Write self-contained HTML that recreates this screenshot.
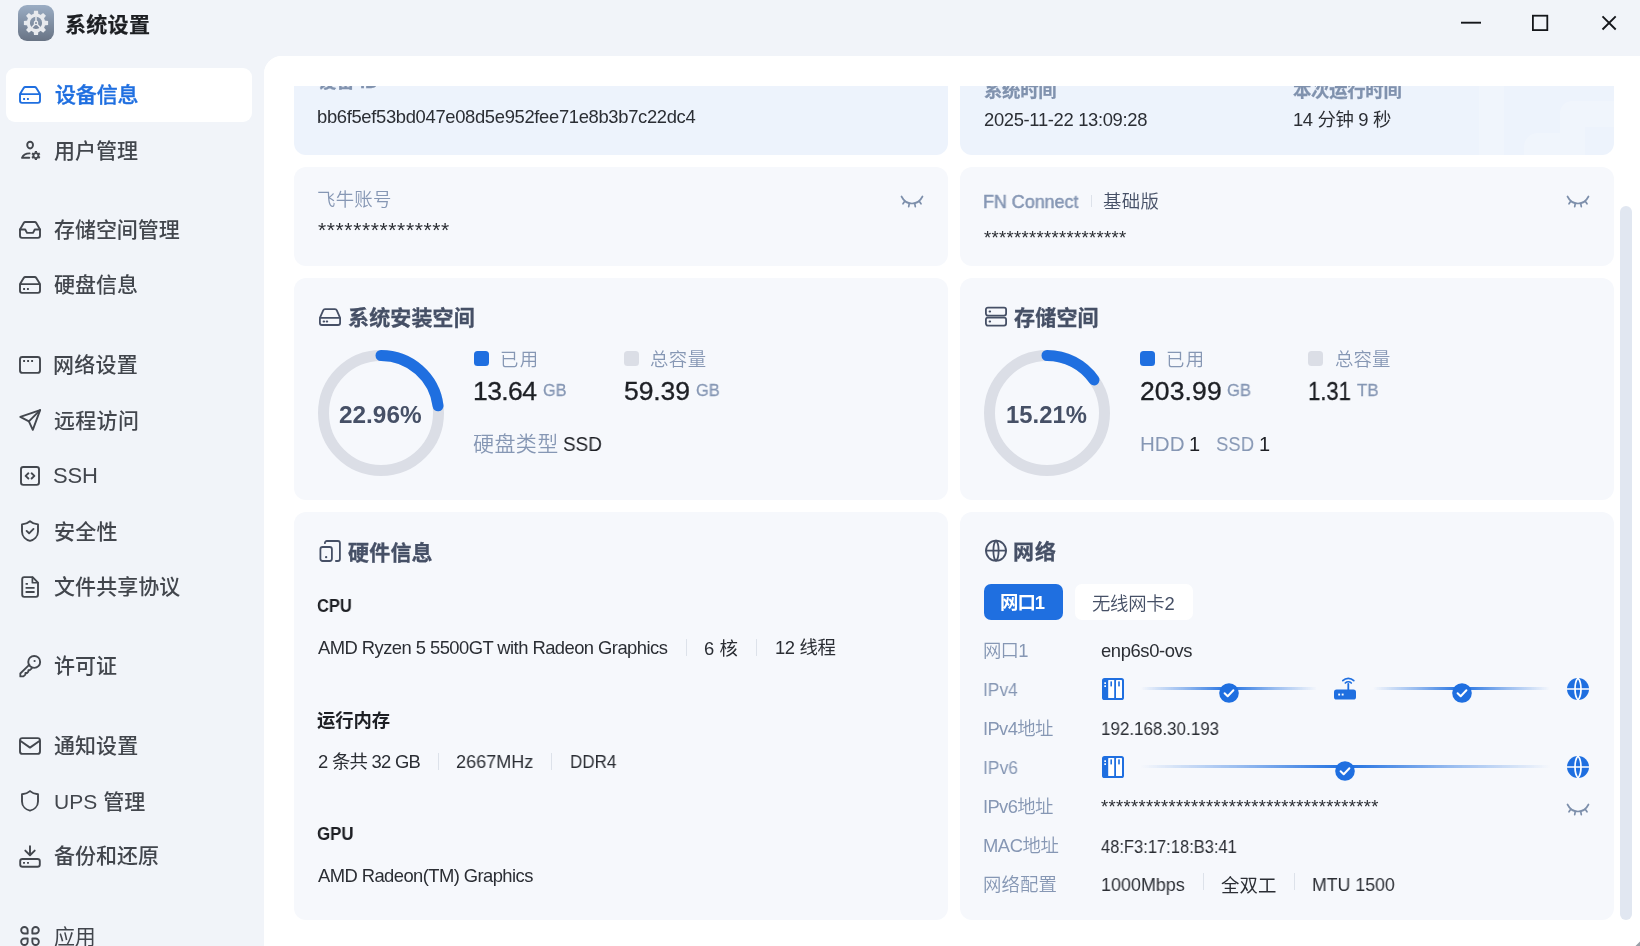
<!DOCTYPE html>
<html lang="zh-CN">
<head>
<meta charset="utf-8">
<title>系统设置</title>
<style>
*{box-sizing:border-box;margin:0;padding:0}
html,body{width:1640px;height:946px;overflow:hidden}
body{position:relative;background:#f1f4f9;font-family:"Liberation Sans","Noto Sans CJK SC",sans-serif;color:#2b2e34;font-size:18px}
.a{position:absolute;white-space:nowrap}
div.a{will-change:transform}
svg{display:block;overflow:visible}
svg.a{position:absolute}
.card{position:absolute;background:#f6f8fc;border-radius:12px;width:654px}
.sep{position:absolute;width:1px;background:#dde2ea}
.sq{position:absolute;width:15px;height:15px;border-radius:3.5px}
.ico{position:absolute;fill:none;stroke:#454a52;stroke-width:1.75;stroke-linecap:round;stroke-linejoin:round}
</style>
</head>
<body>
<div class="a" style="left:18px;top:5px;width:36px;height:36px;border-radius:9px;background:linear-gradient(180deg,#9badc4 0%,#687384 100%)"><svg viewBox="0 0 36 36" width="36" height="36">
<defs><linearGradient id="gg" x1="0" y1="0" x2="0" y2="1"><stop offset="0" stop-color="#f1f2f4"/><stop offset="1" stop-color="#dcdfe4"/></linearGradient></defs>
<g transform="translate(18 17.900)" fill="#e8eaee" stroke="none"><path d="M-2.500 -8L-2 -12.100H2L2.500 -8Z" transform="rotate(0)"/><path d="M-2.500 -8L-2 -12.100H2L2.500 -8Z" transform="rotate(45)"/><path d="M-2.500 -8L-2 -12.100H2L2.500 -8Z" transform="rotate(90)"/><path d="M-2.500 -8L-2 -12.100H2L2.500 -8Z" transform="rotate(135)"/><path d="M-2.500 -8L-2 -12.100H2L2.500 -8Z" transform="rotate(180)"/><path d="M-2.500 -8L-2 -12.100H2L2.500 -8Z" transform="rotate(225)"/><path d="M-2.500 -8L-2 -12.100H2L2.500 -8Z" transform="rotate(270)"/><path d="M-2.500 -8L-2 -12.100H2L2.500 -8Z" transform="rotate(315)"/>
<circle r="7.700" fill="none" stroke="#e8eaee" stroke-width="3.200"/>
<path d="M0 0V-6.500M0 0L-4.500 5M0 0L4.500 5" stroke="#e8eaee" stroke-width="1.500" fill="none"/>
<circle r="2.300"/><circle r="1" fill="#7f8b9e"/>
</g></svg></div>
<svg class="a" style="left:1440px;top:0" width="200" height="56" viewBox="0 0 200 56" fill="none" stroke="#15171b" stroke-width="1.9">
<path d="M21 22.7H41"/>
<rect x="92.9" y="15.7" width="14.4" height="14.4" stroke-width="1.8"/>
<path d="M162.5 16.3L175.7 29.5M175.7 16.3L162.5 29.5"/>
</svg>
<div class="a" style="left:6px;top:68px;width:246px;height:54px;border-radius:9px;background:#fff"></div>
<svg class="a" style="left:0;top:0" width="264" height="946" viewBox="0 0 264 946" fill="none" stroke="#43474e" stroke-width="1.900" stroke-linecap="round" stroke-linejoin="round"><g stroke="#1f6fe0"><path d="M20 94.10000000000001V100.85000000000001a2 2 0 0 0 2 2H38a2 2 0 0 0 2-2V94.10000000000001M20 94.10000000000001H40M20 94.10000000000001L23.700 87.95a2 2 0 0 1 1.750-1H34.550a2 2 0 0 1 1.750 1L40 94.10000000000001"/><path d="M23.150 99.0H25.050M26.950 99.0H28.850" stroke-linecap="butt"/></g>
<ellipse cx="30.100" cy="145.1" rx="2.900" ry="3.350"/><path d="M29.600 153.4C25.500 153.4 23 155.2 22 157.8H29.300"/><circle cx="35.9" cy="155.6" r="2.500"/><path d="M38.41 157.05L39.80 157.85M35.90 158.50L35.90 160.10M33.39 157.05L32.00 157.85M33.39 154.15L32.00 153.35M35.90 152.70L35.90 151.10M38.41 154.15L39.80 153.35" stroke-width="2.200" stroke-linecap="butt"/>
<path d="M20 229.5V235.85a2 2 0 0 0 2 2H38a2 2 0 0 0 2-2V229.5L36.300 222.95000000000002a2 2 0 0 0-1.750-1H25.450a2 2 0 0 0-1.750 1L20 229.5Z"/><path d="M20 229.5H25.200L27 232.9H33L34.800 229.5H40"/>
<path d="M20 284.09999999999997V290.84999999999997a2 2 0 0 0 2 2H38a2 2 0 0 0 2-2V284.09999999999997M20 284.09999999999997H40M20 284.09999999999997L23.700 277.95a2 2 0 0 1 1.750-1H34.550a2 2 0 0 1 1.750 1L40 284.09999999999997"/><path d="M23.150 289.0H25.050M26.950 289.0H28.850" stroke-linecap="butt"/>
<rect x="20" y="356.95" width="20" height="15.900" rx="2.400"/><path d="M23.150 361.0H25.050M27.150 361.0H29.050M31.150 361.0H33.050" stroke-linecap="butt"/>
<path d="M40.100 410.1L20.300 416.9L28.900 421.3L32.800 429.8Z"/><path d="M40.100 410.1L28.900 421.3"/>
<rect x="21" y="466.95" width="18" height="17.900" rx="2.300"/><path d="M28.400 473.29999999999995L25.600 475.9L28.400 478.5M31.600 473.29999999999995L34.400 475.9L31.600 478.5"/>
<path d="M30 521.2C28 523.0 25 524.0 22 524.4000000000001V531.5C22 536.8 26.300 539.9 30 540.8C33.700 539.9 38 536.8 38 531.5V524.4000000000001C35 524.0 32 523.0 30 521.2Z"/><path d="M26.600 530.9L29.100 533.3L33.500 528.9"/>
<path d="M32.600 577.15H24.200a2 2 0 0 0-2 2V594.85a2 2 0 0 0 2 2H36a2 2 0 0 0 2-2V582.55L32.600 577.15Z"/><path d="M32.400 577.4499999999999V582.75H37.700" stroke-width="1.700"/><path d="M25.600 583.9H27.900M25.600 587.9H34.600M25.600 592H34.600" stroke-linecap="butt"/>
<circle cx="34.2" cy="661.9" r="5.950"/><circle cx="34.6" cy="661.0" r="1.100" fill="#43474e" stroke="none"/><path d="M29.400 664.6L20.300 673.5V676.4H23.400L25.400 674.6V673H27L28.400 671.6V670.2H29.800L31.800 668.3" stroke-width="1.800"/>
<rect x="20" y="738.1" width="20" height="15.800" rx="2.400"/><path d="M20.600 741L30 747.6L39.400 741"/>
<path d="M30 791.1C28 792.9 25 793.9 22 794.3000000000001V801.4C22 806.6999999999999 26.300 809.8 30 810.6999999999999C33.700 809.8 38 806.6999999999999 38 801.4V794.3000000000001C35 793.9 32 792.9 30 791.1Z"/>
<rect x="20.200" y="859" width="19.600" height="7.700" rx="2.300"/><path d="M23.050 862.9H24.950M27.050 862.9H28.950" stroke-linecap="butt"/><path d="M30 846.3V855M25.300 850.6L30 855.2L34.700 850.6"/>
<path d="M24.4 926.95A3.25 3.25 0 0 1 27.65 930.2V933.45H24.4A3.25 3.25 0 0 1 24.4 926.95Z"/><path d="M35.6 926.95A3.25 3.25 0 0 1 35.6 933.45H32.35V930.2A3.25 3.25 0 0 1 35.6 926.95Z"/><path d="M24.4 945.05A3.25 3.25 0 0 1 24.4 938.55H27.65V941.8A3.25 3.25 0 0 1 24.4 945.05Z"/><path d="M35.6 945.05A3.25 3.25 0 0 0 35.6 938.55H32.35V941.8A3.25 3.25 0 0 0 35.6 945.05Z"/></svg>
<div class="a" style="left:264px;top:56px;width:1376px;height:890px;background:#fff;border-top-left-radius:18px"></div>
<div class="card" style="left:294px;top:60px;height:95px;background:#edf3fc"></div>
<div class="card" id="c2" style="left:960px;top:60px;height:95px;background:#edf3fc;overflow:hidden"><div style="position:absolute;left:519px;top:0;width:25px;height:95px;background:rgba(255,255,255,.2)"></div><div style="position:absolute;left:600px;top:41px;width:60px;height:26px;border-radius:12px 0 0 0;background:rgba(255,255,255,.2)"></div><div style="position:absolute;left:564px;top:73px;width:61px;height:30px;border-radius:14px 0 0 0;background:rgba(255,255,255,.2)"></div><div style="position:absolute;left:600px;top:67px;width:25px;height:6px;background:rgba(255,255,255,.2)"></div></div>
<div class="card" style="left:294px;top:167px;height:99px"></div>
<div class="card" style="left:960px;top:167px;height:99px"></div>
<div class="card" style="left:294px;top:278px;height:222px"></div>
<div class="card" style="left:960px;top:278px;height:222px"></div>
<div class="card" style="left:294px;top:512px;height:408px"></div>
<div class="card" style="left:960px;top:512px;height:408px"></div>
<div class="a" style="left:1620px;top:206px;width:12px;height:714px;border-radius:6px;background:#e1e7f1"></div>
<div class="a" style="left:984px;top:584px;width:79px;height:36px;border-radius:7px;background:#1f6fe0"></div>
<div class="a" style="left:1075px;top:584px;width:118px;height:36px;border-radius:7px;background:#fff"></div>
<div class="sep" style="left:1091px;top:195.2px;height:11.6px"></div>
<div class="sep" style="left:686px;top:638.5px;height:17.3px"></div>
<div class="sep" style="left:756px;top:638.5px;height:17.3px"></div>
<div class="sep" style="left:438px;top:752.5px;height:17.0px"></div>
<div class="sep" style="left:551px;top:752.5px;height:17.0px"></div>
<div class="sep" style="left:1203px;top:872.5px;height:17.0px"></div>
<div class="sep" style="left:1294px;top:872.5px;height:17.0px"></div>
<div class="sq" style="left:474px;top:351px;background:#1f6fe0"></div>
<div class="sq" style="left:624px;top:351px;background:#dbdee6"></div>
<div class="sq" style="left:1140px;top:351px;background:#1f6fe0"></div>
<div class="sq" style="left:1308px;top:351px;background:#dbdee6"></div>
<svg class="a" style="left:318px;top:350px" width="126" height="126" viewBox="0 0 126 126" fill="none"><circle cx="63" cy="63" r="57.5" stroke="#dbdee6" stroke-width="11"/><circle cx="63" cy="63" r="57.5" stroke="#1f6fe0" stroke-width="11" stroke-linecap="round" stroke-dasharray="82.95 400" transform="rotate(-90 63 63)"/></svg>
<svg class="a" style="left:984px;top:350px" width="126" height="126" viewBox="0 0 126 126" fill="none"><circle cx="63" cy="63" r="57.5" stroke="#dbdee6" stroke-width="11"/><circle cx="63" cy="63" r="57.5" stroke="#1f6fe0" stroke-width="11" stroke-linecap="round" stroke-dasharray="54.95 400" transform="rotate(-90 63 63)"/></svg>
<svg class="a" style="left:318px;top:305px" width="24" height="24" viewBox="0 0 24 24" fill="none" stroke="#465066" stroke-width="1.8" stroke-linecap="round" stroke-linejoin="round"><path d="M1.900 12.800V18a2 2 0 0 0 2 2H20.100a2 2 0 0 0 2-2V12.800M1.900 12.800H22.100M1.900 12.800L5.200 5.400a2 2 0 0 1 1.800-1.200H17a2 2 0 0 1 1.800 1.200L22.100 12.800"/><path d="M5.600 16.400h.5M8.700 16.400h.5" stroke-width="2"/></svg>
<svg class="a" style="left:984px;top:305px" width="24" height="24" viewBox="0 0 24 24" fill="none" stroke="#465066" stroke-width="1.8" stroke-linecap="round" stroke-linejoin="round"><rect x="1.900" y="2.600" width="20.200" height="8" rx="2"/><rect x="1.900" y="12.600" width="20.200" height="8" rx="2"/><path d="M5.600 6.600h.5M5.600 16.600h.5" stroke-width="2"/></svg>
<svg class="a" style="left:318px;top:539px" width="24" height="24" viewBox="0 0 24 24" fill="none" stroke="#465066" stroke-width="1.8" stroke-linecap="round" stroke-linejoin="round"><rect x="2.400" y="8" width="11.500" height="14" rx="2.200"/><path d="M6.900 4.200V4a2 2 0 0 1 2-2H19.900a2 2 0 0 1 2 2V20a2 2 0 0 1-2 2H17.900"/><path d="M8.100 18.200h.1" stroke-width="2.200"/></svg>
<svg class="a" style="left:984px;top:539px" width="24" height="24" viewBox="0 0 24 24" fill="none" stroke="#465066" stroke-width="1.8" stroke-linecap="round" stroke-linejoin="round"><circle cx="12" cy="11.700" r="10"/><path d="M2 11.700H22M12 1.700C8.500 4.700 8.500 18.700 12 21.700M12 1.700C15.500 4.700 15.500 18.700 12 21.700"/></svg>
<svg class="a" style="left:900px;top:195px" width="24" height="13" viewBox="0 0 24 13" fill="none" stroke="#7d8fab" stroke-width="1.7" stroke-linecap="round"><path d="M1.500 1.500C4 6.500 8 8.500 12 8.500S20 6.500 22.500 1.500M4.700 6.300L3 8.800M19.300 6.300L21 8.800M9.300 8.300L8.700 11.600M14.700 8.300L15.300 11.600"/></svg>
<svg class="a" style="left:1566px;top:195px" width="24" height="13" viewBox="0 0 24 13" fill="none" stroke="#7d8fab" stroke-width="1.7" stroke-linecap="round"><path d="M1.500 1.500C4 6.500 8 8.500 12 8.500S20 6.500 22.500 1.500M4.700 6.300L3 8.800M19.300 6.300L21 8.800M9.300 8.300L8.700 11.600M14.700 8.300L15.300 11.600"/></svg>
<svg class="a" style="left:1566px;top:803px" width="24" height="13" viewBox="0 0 24 13" fill="none" stroke="#7d8fab" stroke-width="1.7" stroke-linecap="round"><path d="M1.500 1.500C4 6.500 8 8.500 12 8.500S20 6.500 22.500 1.500M4.700 6.300L3 8.800M19.300 6.300L21 8.800M9.300 8.300L8.700 11.600M14.700 8.300L15.300 11.600"/></svg>
<svg class="a" style="left:1102px;top:678px" width="22" height="22" viewBox="0 0 22 22"><rect x="0" y="0" width="22" height="22" rx="2.600" fill="#1f6fe0"/><rect x="6.200" y="2" width="6" height="18" rx=".6" fill="#fff"/><rect x="14" y="2" width="6" height="18" rx=".6" fill="#fff"/><rect x="8.400" y="3.400" width="1.600" height="5" fill="#1f6fe0"/><rect x="16.200" y="3.400" width="1.600" height="5" fill="#1f6fe0"/><rect x="2.300" y="4.300" width="1.700" height="1.700" fill="#fff"/><rect x="2.300" y="7.300" width="1.700" height="1.700" fill="#fff"/></svg>
<div class="a" style="left:1141px;top:687.25px;width:176px;height:2.5px;background:linear-gradient(90deg,rgba(31,111,224,0) 0%,rgba(31,111,224,.45) 25%,#1f6fe0 50%,rgba(31,111,224,.45) 75%,rgba(31,111,224,0) 100%)"></div>
<svg class="a" style="left:1219px;top:682.7px" width="20" height="20" viewBox="0 0 20 20"><circle cx="10" cy="10" r="9.800" fill="#1f6fe0"/><path d="M5.600 10.200L8.700 13.200L14.400 7.300" fill="none" stroke="#fff" stroke-width="2" stroke-linecap="round" stroke-linejoin="round"/></svg>
<svg class="a" style="left:1334px;top:677px" width="22" height="23" viewBox="0 0 22 23"><rect x="0" y="12.500" width="22" height="10" rx="2.600" fill="#1f6fe0"/><rect x="4.200" y="16.600" width="1.900" height="1.900" fill="#fff"/><rect x="7.700" y="16.600" width="1.900" height="1.900" fill="#fff"/><path d="M14.300 13V6.800" stroke="#1f6fe0" stroke-width="1.800" fill="none" stroke-linecap="round"/><path d="M11.300 6a4.300 4.300 0 0 1 6 0M8.800 3.700a7.800 7.800 0 0 1 11 0" stroke="#1f6fe0" stroke-width="1.700" fill="none" stroke-linecap="round"/></svg>
<div class="a" style="left:1373px;top:687.25px;width:177px;height:2.5px;background:linear-gradient(90deg,rgba(31,111,224,0) 0%,rgba(31,111,224,.45) 25%,#1f6fe0 50%,rgba(31,111,224,.45) 75%,rgba(31,111,224,0) 100%)"></div>
<svg class="a" style="left:1451.7px;top:682.7px" width="20" height="20" viewBox="0 0 20 20"><circle cx="10" cy="10" r="9.800" fill="#1f6fe0"/><path d="M5.600 10.200L8.700 13.200L14.400 7.300" fill="none" stroke="#fff" stroke-width="2" stroke-linecap="round" stroke-linejoin="round"/></svg>
<svg class="a" style="left:1567px;top:678px" width="22" height="22" viewBox="0 0 22 22"><circle cx="11" cy="11" r="11" fill="#1f6fe0"/><path d="M0 11H22M11 0C7 4.500 7 17.500 11 22M11 0C15 4.500 15 17.500 11 22" fill="none" stroke="#fff" stroke-width="1.700"/></svg>
<svg class="a" style="left:1102px;top:756px" width="22" height="22" viewBox="0 0 22 22"><rect x="0" y="0" width="22" height="22" rx="2.600" fill="#1f6fe0"/><rect x="6.200" y="2" width="6" height="18" rx=".6" fill="#fff"/><rect x="14" y="2" width="6" height="18" rx=".6" fill="#fff"/><rect x="8.400" y="3.400" width="1.600" height="5" fill="#1f6fe0"/><rect x="16.200" y="3.400" width="1.600" height="5" fill="#1f6fe0"/><rect x="2.300" y="4.300" width="1.700" height="1.700" fill="#fff"/><rect x="2.300" y="7.300" width="1.700" height="1.700" fill="#fff"/></svg>
<div class="a" style="left:1141px;top:765.25px;width:409px;height:2.5px;background:linear-gradient(90deg,rgba(31,111,224,0) 0%,rgba(31,111,224,.45) 25%,#1f6fe0 50%,rgba(31,111,224,.45) 75%,rgba(31,111,224,0) 100%)"></div>
<svg class="a" style="left:1335.2px;top:760.7px" width="20" height="20" viewBox="0 0 20 20"><circle cx="10" cy="10" r="9.800" fill="#1f6fe0"/><path d="M5.600 10.200L8.700 13.200L14.400 7.300" fill="none" stroke="#fff" stroke-width="2" stroke-linecap="round" stroke-linejoin="round"/></svg>
<svg class="a" style="left:1567px;top:756px" width="22" height="22" viewBox="0 0 22 22"><circle cx="11" cy="11" r="11" fill="#1f6fe0"/><path d="M0 11H22M11 0C7 4.500 7 17.500 11 22M11 0C15 4.500 15 17.500 11 22" fill="none" stroke="#fff" stroke-width="1.700"/></svg>
<div class="a" id="title" style="left:65px;top:10px;font-size:21px;line-height:29px;font-weight:700;color:#1d1f23;letter-spacing:0.300px;-webkit-text-stroke:.25px #1d1f23">系统设置</div>
<div class="a" id="n1" style="left:55px;top:80px;font-size:21px;line-height:29px;font-weight:500;color:#1f6fe0;letter-spacing:-0.152px;-webkit-text-stroke:.4px #1f6fe0">设备信息</div>
<div class="a" id="n2" style="left:54px;top:136px;font-size:21px;line-height:29px;font-weight:500;color:#42464d;letter-spacing:0.011px">用户管理</div>
<div class="a" id="n3" style="left:54px;top:215px;font-size:21px;line-height:29px;font-weight:500;color:#42464d;letter-spacing:-0.047px">存储空间管理</div>
<div class="a" id="n4" style="left:54px;top:270px;font-size:21px;line-height:29px;font-weight:500;color:#42464d;letter-spacing:0.018px">硬盘信息</div>
<div class="a" id="n5" style="left:53px;top:350px;font-size:21px;line-height:29px;font-weight:500;color:#42464d;letter-spacing:0.235px">网络设置</div>
<div class="a" id="n6" style="left:54px;top:406px;font-size:21px;line-height:29px;font-weight:500;color:#42464d;letter-spacing:0.305px">远程访问</div>
<div class="a" id="n7" style="left:53px;top:460px;font-size:22px;line-height:31px;font-weight:500;color:#42464d;letter-spacing:-0.213px">SSH</div>
<div class="a" id="n8" style="left:54px;top:517px;font-size:21px;line-height:29px;font-weight:500;color:#42464d;letter-spacing:0.293px">安全性</div>
<div class="a" id="n9" style="left:54px;top:572px;font-size:21px;line-height:29px;font-weight:500;color:#42464d;letter-spacing:0.063px">文件共享协议</div>
<div class="a" id="n10" style="left:54px;top:651px;font-size:21px;line-height:29px;font-weight:500;color:#42464d;letter-spacing:0.029px">许可证</div>
<div class="a" id="n11" style="left:54px;top:731px;font-size:21px;line-height:29px;font-weight:500;color:#42464d;letter-spacing:0.048px">通知设置</div>
<div class="a" id="n12" style="left:54px;top:787px;font-size:21px;line-height:29px;font-weight:500;color:#42464d;letter-spacing:0.070px">UPS 管理</div>
<div class="a" id="n13" style="left:54px;top:841px;font-size:21px;line-height:29px;font-weight:500;color:#42464d;letter-spacing:-0.011px">备份和还原</div>
<div class="a" id="hash" style="left:317px;top:104px;font-size:18.4px;line-height:26px;font-weight:400;color:#2b2e34;letter-spacing:-0.334px">bb6f5ef53bd047e08d5e952fee71e8b3b7c22dc4</div>
<div class="a" id="time" style="left:984px;top:107px;font-size:18.4px;line-height:26px;font-weight:400;color:#2b2e34;letter-spacing:-0.334px">2025-11-22 13:09:28</div>
<div class="a" id="uptime" style="left:1293px;top:107px;font-size:18.4px;line-height:26px;font-weight:400;color:#2b2e34;letter-spacing:-0.360px">14 分钟 9 秒</div>
<div class="a" id="acct" style="left:317px;top:187px;font-size:18.4px;line-height:26px;font-weight:350;color:#8697b4;letter-spacing:0.249px">飞牛账号</div>
<div class="a" id="star1" style="left:318px;top:215px;font-size:21px;line-height:29px;font-weight:400;color:#2b2e34;letter-spacing:0.618px">***************</div>
<div class="a" id="fnc" style="left:983px;top:189px;font-size:18.4px;line-height:26px;font-weight:400;color:#8697b4;letter-spacing:0.000px;-webkit-text-stroke:.5px #8697b4;transform:scaleX(0.9731);transform-origin:0 50%">FN Connect</div>
<div class="a" id="basic" style="left:1103px;top:189px;font-size:18.4px;line-height:26px;font-weight:350;color:#465066;letter-spacing:0.397px">基础版</div>
<div class="a" id="star2" style="left:984px;top:225px;font-size:18.4px;line-height:26px;font-weight:400;color:#2b2e34;letter-spacing:0.348px">*******************</div>
<div class="a" id="h1" style="left:348px;top:303px;font-size:21px;line-height:29px;font-weight:700;color:#465066;letter-spacing:0.146px;-webkit-text-stroke:.3px #465066">系统安装空间</div>
<div class="a" id="pct1" style="left:339px;top:399px;font-size:23.2px;line-height:32px;font-weight:700;color:#465066;letter-spacing:0.000px;transform:scaleX(1.0501);transform-origin:0 50%">22.96%</div>
<div class="a" id="used1" style="left:500px;top:347px;font-size:18.4px;line-height:26px;font-weight:350;color:#8697b4;letter-spacing:1.356px">已用</div>
<div class="a" id="v1" style="left:473px;top:373px;font-size:26.5px;line-height:37px;font-weight:400;color:#1e2025;letter-spacing:-0.609px;-webkit-text-stroke:.35px #1e2025">13.64</div>
<div class="a" id="u1" style="left:543px;top:379px;font-size:17px;line-height:24px;font-weight:400;color:#8697b4;letter-spacing:0.000px;-webkit-text-stroke:.3px #8697b4;transform:scaleX(0.9574);transform-origin:0 50%">GB</div>
<div class="a" id="tot1" style="left:650px;top:347px;font-size:18.4px;line-height:26px;font-weight:350;color:#8697b4;letter-spacing:0.471px">总容量</div>
<div class="a" id="v2" style="left:624px;top:373px;font-size:26.5px;line-height:37px;font-weight:400;color:#1e2025;letter-spacing:-0.095px;-webkit-text-stroke:.35px #1e2025">59.39</div>
<div class="a" id="u2" style="left:696px;top:379px;font-size:17px;line-height:24px;font-weight:400;color:#8697b4;letter-spacing:0.000px;-webkit-text-stroke:.3px #8697b4;transform:scaleX(0.9640);transform-origin:0 50%">GB</div>
<div class="a" id="dtype" style="left:473px;top:429px;font-size:21px;line-height:29px;font-weight:350;color:#8697b4;letter-spacing:0.436px">硬盘类型</div>
<div class="a" id="ssd0" style="left:563px;top:430px;font-size:20px;line-height:28px;font-weight:400;color:#1e2025;letter-spacing:0.000px;transform:scaleX(0.9443);transform-origin:0 50%">SSD</div>
<div class="a" id="h2" style="left:1014px;top:303px;font-size:21px;line-height:29px;font-weight:700;color:#465066;letter-spacing:0.192px;-webkit-text-stroke:.3px #465066">存储空间</div>
<div class="a" id="pct2" style="left:1006px;top:399px;font-size:23.2px;line-height:32px;font-weight:700;color:#465066;letter-spacing:0.000px;transform:scaleX(1.0278);transform-origin:0 50%">15.21%</div>
<div class="a" id="used2" style="left:1166px;top:347px;font-size:18.4px;line-height:26px;font-weight:350;color:#8697b4;letter-spacing:1.356px">已用</div>
<div class="a" id="v3" style="left:1140px;top:373px;font-size:26.5px;line-height:37px;font-weight:400;color:#1e2025;letter-spacing:0.130px;-webkit-text-stroke:.35px #1e2025">203.99</div>
<div class="a" id="u3" style="left:1227px;top:379px;font-size:17px;line-height:24px;font-weight:400;color:#8697b4;letter-spacing:0.000px;-webkit-text-stroke:.3px #8697b4;transform:scaleX(0.9756);transform-origin:0 50%">GB</div>
<div class="a" id="tot2" style="left:1335px;top:347px;font-size:18.4px;line-height:26px;font-weight:350;color:#8697b4;letter-spacing:0.113px">总容量</div>
<div class="a" id="v4" style="left:1308px;top:373px;font-size:26.5px;line-height:37px;font-weight:400;color:#1e2025;letter-spacing:0.000px;-webkit-text-stroke:.35px #1e2025;transform:scaleX(0.8329);transform-origin:0 50%">1.31</div>
<div class="a" id="u4" style="left:1357px;top:379px;font-size:17px;line-height:24px;font-weight:400;color:#8697b4;letter-spacing:0.000px;-webkit-text-stroke:.3px #8697b4;transform:scaleX(0.9857);transform-origin:0 50%">TB</div>
<div class="a" id="hdd" style="left:1140px;top:430px;font-size:20px;line-height:28px;font-weight:400;color:#8697b4;letter-spacing:0.000px;transform:scaleX(1.0283);transform-origin:0 50%">HDD</div>
<div class="a" id="hdd1" style="left:1189px;top:430px;font-size:20px;line-height:28px;font-weight:400;color:#1e2025;letter-spacing:0.000px">1</div>
<div class="a" id="ssd" style="left:1216px;top:430px;font-size:20px;line-height:28px;font-weight:400;color:#8697b4;letter-spacing:0.000px;transform:scaleX(0.9261);transform-origin:0 50%">SSD</div>
<div class="a" id="ssd1" style="left:1259px;top:430px;font-size:20px;line-height:28px;font-weight:400;color:#1e2025;letter-spacing:0.000px">1</div>
<div class="a" id="h3" style="left:348px;top:538px;font-size:21px;line-height:29px;font-weight:700;color:#465066;letter-spacing:0.204px;-webkit-text-stroke:.3px #465066">硬件信息</div>
<div class="a" id="cpuh" style="left:317px;top:593px;font-size:18.4px;line-height:26px;font-weight:700;color:#1e2025;letter-spacing:0.000px;transform:scaleX(0.8979);transform-origin:0 50%">CPU</div>
<div class="a" id="cpu" style="left:318px;top:635px;font-size:18.4px;line-height:26px;font-weight:400;color:#2b2e34;letter-spacing:-0.549px">AMD Ryzen 5 5500GT with Radeon Graphics</div>
<div class="a" id="cores" style="left:704px;top:636px;font-size:18.4px;line-height:26px;font-weight:400;color:#2b2e34;letter-spacing:0.099px">6 核</div>
<div class="a" id="threads" style="left:775px;top:635px;font-size:18.4px;line-height:26px;font-weight:400;color:#2b2e34;letter-spacing:-0.392px">12 线程</div>
<div class="a" id="memh" style="left:317px;top:708px;font-size:18.4px;line-height:26px;font-weight:700;color:#1e2025;letter-spacing:-0.172px">运行内存</div>
<div class="a" id="mem" style="left:318px;top:749px;font-size:18.4px;line-height:26px;font-weight:400;color:#2b2e34;letter-spacing:-0.724px">2 条共 32 GB</div>
<div class="a" id="mhz" style="left:456px;top:749px;font-size:18.4px;line-height:26px;font-weight:400;color:#2b2e34;letter-spacing:0.000px;transform:scaleX(0.9818);transform-origin:0 50%">2667MHz</div>
<div class="a" id="ddr" style="left:570px;top:749px;font-size:18.4px;line-height:26px;font-weight:400;color:#2b2e34;letter-spacing:0.000px;transform:scaleX(0.9283);transform-origin:0 50%">DDR4</div>
<div class="a" id="gpuh" style="left:317px;top:821px;font-size:18.4px;line-height:26px;font-weight:700;color:#1e2025;letter-spacing:0.000px;transform:scaleX(0.9188);transform-origin:0 50%">GPU</div>
<div class="a" id="gpu" style="left:318px;top:863px;font-size:18.4px;line-height:26px;font-weight:400;color:#2b2e34;letter-spacing:-0.570px">AMD Radeon(TM) Graphics</div>
<div class="a" id="h4" style="left:1013px;top:537px;font-size:21px;line-height:29px;font-weight:700;color:#465066;letter-spacing:0.935px;-webkit-text-stroke:.3px #465066">网络</div>
<div class="a" id="tab1" style="left:1000px;top:590px;font-size:18.4px;line-height:26px;font-weight:700;color:#ffffff;letter-spacing:-0.969px">网口1</div>
<div class="a" id="tab2" style="left:1092px;top:591px;font-size:18.4px;line-height:26px;font-weight:350;color:#465066;letter-spacing:-0.285px">无线网卡2</div>
<div class="a" id="l1" style="left:983px;top:638px;font-size:18.4px;line-height:26px;font-weight:350;color:#8697b4;letter-spacing:-0.772px">网口1</div>
<div class="a" id="enp" style="left:1101px;top:638px;font-size:18.4px;line-height:26px;font-weight:400;color:#2b2e34;letter-spacing:-0.392px">enp6s0-ovs</div>
<div class="a" id="l2" style="left:983px;top:677px;font-size:18.4px;line-height:26px;font-weight:400;color:#8697b4;letter-spacing:0.000px;transform:scaleX(0.9453);transform-origin:0 50%">IPv4</div>
<div class="a" id="l3" style="left:983px;top:716px;font-size:18.4px;line-height:26px;font-weight:350;color:#8697b4;letter-spacing:-0.647px">IPv4地址</div>
<div class="a" id="ip4" style="left:1101px;top:716px;font-size:18.4px;line-height:26px;font-weight:400;color:#2b2e34;letter-spacing:0.000px;transform:scaleX(0.9237);transform-origin:0 50%">192.168.30.193</div>
<div class="a" id="l4" style="left:983px;top:755px;font-size:18.4px;line-height:26px;font-weight:400;color:#8697b4;letter-spacing:0.000px;transform:scaleX(0.9509);transform-origin:0 50%">IPv6</div>
<div class="a" id="l5" style="left:983px;top:794px;font-size:18.4px;line-height:26px;font-weight:350;color:#8697b4;letter-spacing:-0.647px">IPv6地址</div>
<div class="a" id="star3" style="left:1101px;top:794px;font-size:18.4px;line-height:26px;font-weight:400;color:#2b2e34;letter-spacing:0.351px">*************************************</div>
<div class="a" id="l6" style="left:983px;top:833px;font-size:18.4px;line-height:26px;font-weight:350;color:#8697b4;letter-spacing:-0.451px">MAC地址</div>
<div class="a" id="mac" style="left:1101px;top:834px;font-size:18.4px;line-height:26px;font-weight:400;color:#2b2e34;letter-spacing:0.000px;transform:scaleX(0.8978);transform-origin:0 50%">48:F3:17:18:B3:41</div>
<div class="a" id="l7" style="left:983px;top:872px;font-size:18.4px;line-height:26px;font-weight:350;color:#8697b4;letter-spacing:0.134px">网络配置</div>
<div class="a" id="mbps" style="left:1101px;top:872px;font-size:18.4px;line-height:26px;font-weight:400;color:#2b2e34;letter-spacing:0.000px;transform:scaleX(0.9747);transform-origin:0 50%">1000Mbps</div>
<div class="a" id="dup" style="left:1221px;top:873px;font-size:18.4px;line-height:26px;font-weight:400;color:#2b2e34;letter-spacing:0.118px">全双工</div>
<div class="a" id="mtu" style="left:1312px;top:872px;font-size:18.4px;line-height:26px;font-weight:400;color:#2b2e34;letter-spacing:0.000px;transform:scaleX(0.9630);transform-origin:0 50%">MTU 1500</div>
<div class="a" id="lab1" style="left:318px;top:69px;font-size:18.4px;line-height:26px;font-weight:700;color:#8092ae;-webkit-text-stroke:.25px #8092ae">设备 ID</div>
<div class="a" id="lab2" style="left:983.5px;top:78px;font-size:18.4px;line-height:26px;font-weight:700;color:#8092ae;-webkit-text-stroke:.25px #8092ae;letter-spacing:-.3px">系统时间</div>
<div class="a" id="lab3" style="left:1292.5px;top:78px;font-size:18.4px;line-height:26px;font-weight:700;color:#8092ae;-webkit-text-stroke:.25px #8092ae;letter-spacing:-.3px">本次运行时间</div>
<div class="a" id="n14" style="left:54px;top:922px;font-size:21px;line-height:29px;color:#42464d;letter-spacing:-.2px">应用</div>
<div class="a" style="left:264px;top:56px;width:1376px;height:30px;background:#fff;border-top-left-radius:18px"></div>
<svg class="a" style="left:1630px;top:936px" width="10" height="10" viewBox="0 0 10 10"><path d="M10 5.500L5.500 10H10Z" fill="#9aa0a8"/></svg>
</body>
</html>
